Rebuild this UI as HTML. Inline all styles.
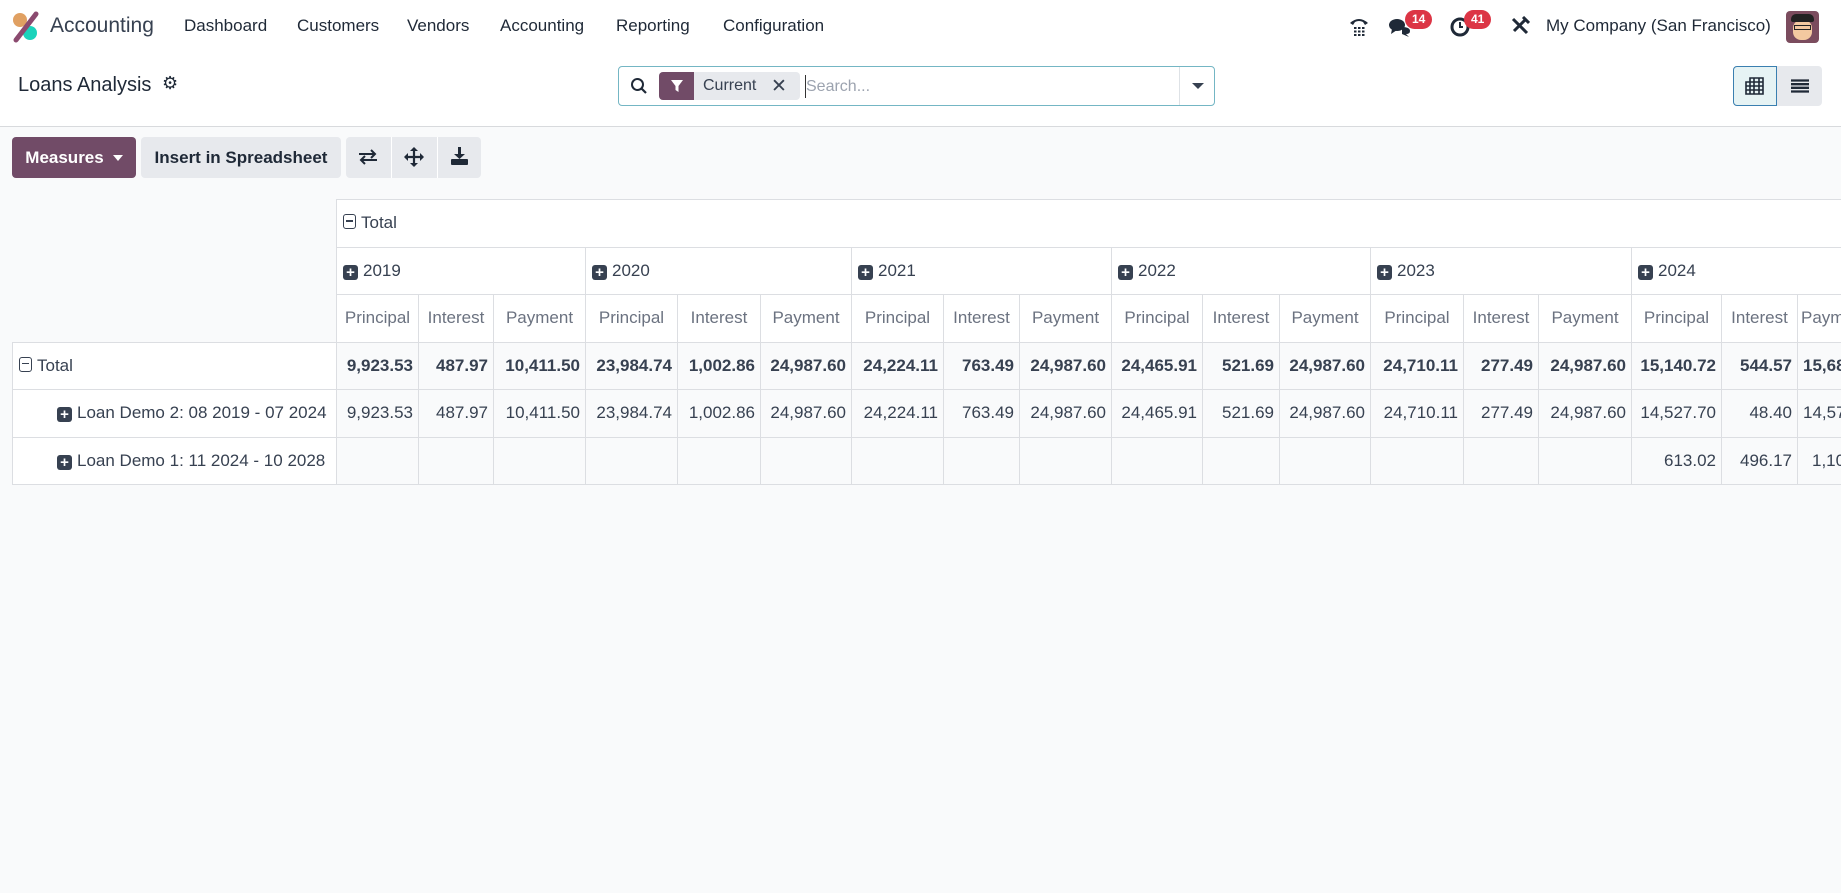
<!DOCTYPE html>
<html><head><meta charset="utf-8"><style>
*{box-sizing:border-box;margin:0;padding:0}
body{width:1841px;height:893px;overflow:hidden;background:#f9fafb;font-family:"Liberation Sans",sans-serif;color:#374151;position:relative}
.nav{position:absolute;left:0;top:0;width:1841px;height:54px;background:#fff}
.nav span{position:absolute;top:16px;font-size:17px;color:#1f2937}
.cp{position:absolute;left:0;top:54px;width:1841px;height:73px;background:#fff;border-bottom:1px solid #d8dadd}
.abs{position:absolute}
.btn{position:absolute;top:137px;height:41px;border-radius:4px;font-size:17px;font-weight:bold;display:flex;align-items:center;justify-content:center}
table{position:absolute;left:12px;top:199px;width:1875px;border-collapse:collapse;table-layout:fixed;font-size:17px}
td{border:1px solid #dcdee2;height:47.5px;padding:0 6px;white-space:nowrap;overflow:hidden}
td.e{border:none;background:transparent}
td.h{background:#fff;color:#374151}
td.m{background:#fff;color:#6b7280;text-align:center;padding:0 3px}
td.n{background:#f9fafb;text-align:right;padding:0 5px}
tr.t td.n{font-weight:bold}
.pl{display:inline-block;width:15px;height:15px;background:#374151;border-radius:3px;color:#fff;font-size:15px;line-height:15px;text-align:center;font-weight:bold;vertical-align:-1px;margin-right:5px}
.mi{display:inline-block;width:13px;height:15px;border:1.5px solid #374151;border-radius:3px;position:relative;vertical-align:-1px;margin-right:5px}
.mi:after{content:"";position:absolute;left:2px;right:2px;top:5px;height:1.5px;background:#374151}
.badge{position:absolute;top:10px;height:19px;background:#dc3545;color:#fff;font-size:12px;font-weight:bold;border-radius:10px;padding:2px 7px}
</style></head><body>
<div class="nav">
<svg class="abs" style="left:10px;top:10px" width="32" height="34" viewBox="0 0 32 34"><circle cx="10" cy="10" r="7" fill="#e0a062"/><circle cx="20" cy="23" r="7" fill="#1ad3bb"/><path d="M26 4 L6 30" stroke="#8b4a6f" stroke-width="5" stroke-linecap="round"/></svg>
<span style="left:50px;top:14px;font-size:21px;color:#374151">Accounting</span>
<span style="left:184px">Dashboard</span><span style="left:297px">Customers</span><span style="left:407px">Vendors</span><span style="left:500px">Accounting</span><span style="left:616px">Reporting</span><span style="left:723px">Configuration</span>
<svg class="abs" style="left:1348px;top:15px" width="22" height="22" viewBox="0 0 22 22"><path d="M2 8 Q11 0 20 8 L17 10 L15 7 Q11 5 7 7 L5 10Z" fill="#1f2937"/><g fill="#1f2937"><rect x="6" y="12" width="2.5" height="2"/><rect x="10" y="12" width="2.5" height="2"/><rect x="14" y="12" width="2.5" height="2"/><rect x="6" y="15.5" width="2.5" height="2"/><rect x="10" y="15.5" width="2.5" height="2"/><rect x="14" y="15.5" width="2.5" height="2"/><rect x="6" y="19" width="2.5" height="2"/><rect x="10" y="19" width="2.5" height="2"/><rect x="14" y="19" width="2.5" height="2"/></g></svg>
<svg class="abs" style="left:1388px;top:16px" width="24" height="22" viewBox="0 0 24 22"><ellipse cx="9" cy="9" rx="8" ry="6" fill="#1f2937"/><path d="M4 13 L3 18 L9 14Z" fill="#1f2937"/><path d="M14 11 Q22 11 22 15 Q22 18 18 18 L21 21 L14 18Z" fill="#1f2937"/></svg>
<div class="badge" style="left:1405px">14</div>
<svg class="abs" style="left:1450px;top:17px" width="20" height="20" viewBox="0 0 20 20"><circle cx="10" cy="10" r="8" fill="none" stroke="#1f2937" stroke-width="3"/><path d="M10 5 V10 H13" stroke="#1f2937" stroke-width="2" fill="none"/></svg>
<div class="badge" style="left:1464px">41</div>
<svg class="abs" style="left:1510px;top:16px" width="20" height="20" viewBox="0 0 20 20"><path d="M3 3 L17 17 M16 3 L4 15" stroke="#1f2937" stroke-width="3"/><path d="M13 1 L19 7" stroke="#1f2937" stroke-width="3"/></svg>
<span style="left:1546px;color:#1f2937">My Company (San Francisco)</span>
<div class="abs" style="left:1786px;top:11px;width:33px;height:32px;border-radius:4px;background:#7b4c5e;overflow:hidden"><div class="abs" style="left:7px;top:9px;width:19px;height:20px;border-radius:8px;background:#f3c9a0"></div><div class="abs" style="left:5px;top:3px;width:23px;height:8px;background:#222;border-radius:5px 5px 2px 2px"></div><div class="abs" style="left:8px;top:14px;width:17px;height:5px;border:1.5px solid #222"></div></div>
</div>
<div class="cp">
<span class="abs" style="left:18px;top:20px;font-size:20px;color:#1f2937">Loans Analysis</span>
<span class="abs" style="left:162px;top:19px;font-size:18px;color:#1f2937">⚙</span>
<div class="abs" style="left:618px;top:12px;width:597px;height:40px;border:1px solid #74b6c4;border-radius:4px;background:#fff"></div>
<svg class="abs" style="left:630px;top:23px" width="18" height="18" viewBox="0 0 18 18"><circle cx="7.5" cy="7.5" r="5.5" fill="none" stroke="#1f2937" stroke-width="2"/><path d="M11.5 11.5 L16 16" stroke="#1f2937" stroke-width="2.2"/></svg>
<div class="abs" style="left:659px;top:18px;width:141px;height:28px;background:#e7e9ed;border-radius:4px"></div>
<div class="abs" style="left:659px;top:18px;width:35px;height:28px;background:#714b67;border-radius:4px 0 0 4px"></div>
<svg class="abs" style="left:670px;top:25px" width="14" height="14" viewBox="0 0 14 14"><path d="M1 1 H13 L8.5 7 V13 L5.5 11 V7Z" fill="#fff"/></svg>
<span class="abs" style="left:703px;top:23px;font-size:16px;color:#374151">Current</span>
<span class="abs" style="left:771px;top:21px;font-size:19px;color:#374151">✕</span>
<div class="abs" style="left:805px;top:21px;width:1px;height:23px;background:#333"></div>
<span class="abs" style="left:806px;top:24px;font-size:16px;color:#9ca3af">Search...</span>
<div class="abs" style="left:1179px;top:13px;width:1px;height:38px;background:#dee2e6"></div>
<div class="abs" style="left:1192px;top:29px;border-left:6px solid transparent;border-right:6px solid transparent;border-top:6px solid #374151"></div>
<div class="abs" style="left:1733px;top:12px;width:89px;height:40px;border-radius:4px;background:#e7e9ed"></div>
<div class="abs" style="left:1733px;top:12px;width:44px;height:40px;border-radius:4px 0 0 4px;background:#e6f3f4;border:1px solid #3a7fb0"></div>
<svg class="abs" style="left:1745px;top:23px" width="19" height="18" viewBox="0 0 19 18"><path d="M5 1 H18 V17 H1 V5 H5Z M1 9 H18 M1 13 H18 M5 5 V17 M9 1 V17 M14 1 V17 M5 5 H18" stroke="#1f2937" stroke-width="1.6" fill="none"/></svg>
<svg class="abs" style="left:1791px;top:25px" width="18" height="14" viewBox="0 0 18 14"><path d="M0 1.5 H18 M0 5.2 H18 M0 8.8 H18 M0 12.5 H18" stroke="#1f2937" stroke-width="2.3"/></svg>
</div>
<div class="btn" style="left:12px;width:124px;background:#714b67;color:#fff">Measures <span style="display:inline-block;margin-left:9px;border-left:5px solid transparent;border-right:5px solid transparent;border-top:6px solid #fff"></span></div>
<div class="btn" style="left:141px;width:200px;background:#e7e9ed;color:#1f2937">Insert in Spreadsheet</div>
<div class="btn" style="left:346px;width:135px;background:#e7e9ed"></div>
<div class="abs" style="left:391px;top:137px;width:1px;height:41px;background:#fff"></div>
<div class="abs" style="left:437px;top:137px;width:1px;height:41px;background:#fff"></div>
<svg class="abs" style="left:358px;top:149px" width="20" height="16" viewBox="0 0 20 16"><path d="M1 5 H17 M13 1 L17 5 L13 9 M19 11 H3 M7 7 L3 11 L7 15" stroke="#1f2937" stroke-width="2" fill="none"/></svg>
<svg class="abs" style="left:404px;top:147px" width="20" height="20" viewBox="0 0 20 20"><path d="M10 1 V19 M1 10 H19" stroke="#1f2937" stroke-width="2.2"/><path d="M10 0 L6 4 H14Z M10 20 L6 16 H14Z M0 10 L4 6 V14Z M20 10 L16 6 V14Z" fill="#1f2937"/></svg>
<svg class="abs" style="left:451px;top:147px" width="17" height="18" viewBox="0 0 17 18"><path d="M8.5 0 V9" stroke="#1f2937" stroke-width="3"/><path d="M3 7 L8.5 12 L14 7Z" fill="#1f2937"/><rect x="0" y="12" width="17" height="6" rx="1" fill="#1f2937"/></svg>
<table>
<colgroup><col style="width:324px"><col style="width:82px"><col style="width:75px"><col style="width:92px"><col style="width:92px"><col style="width:83px"><col style="width:91px"><col style="width:92px"><col style="width:76px"><col style="width:92px"><col style="width:91px"><col style="width:77px"><col style="width:91px"><col style="width:93px"><col style="width:75px"><col style="width:93px"><col style="width:90px"><col style="width:76px"><col style="width:90px"></colgroup>
<tr><td class="e"></td><td class="h" colspan="18"><span class="mi"></span>Total</td></tr>
<tr><td class="e"></td><td class="h" colspan="3"><span class="pl">+</span>2019</td><td class="h" colspan="3"><span class="pl">+</span>2020</td><td class="h" colspan="3"><span class="pl">+</span>2021</td><td class="h" colspan="3"><span class="pl">+</span>2022</td><td class="h" colspan="3"><span class="pl">+</span>2023</td><td class="h" colspan="3"><span class="pl">+</span>2024</td></tr>
<tr><td class="e"></td><td class="m">Principal</td><td class="m">Interest</td><td class="m">Payment</td><td class="m">Principal</td><td class="m">Interest</td><td class="m">Payment</td><td class="m">Principal</td><td class="m">Interest</td><td class="m">Payment</td><td class="m">Principal</td><td class="m">Interest</td><td class="m">Payment</td><td class="m">Principal</td><td class="m">Interest</td><td class="m">Payment</td><td class="m">Principal</td><td class="m">Interest</td><td class="m" style="text-align:left">Payment</td></tr>
<tr class="t"><td class="h"><span class="mi"></span>Total</td><td class="n">9,923.53</td><td class="n">487.97</td><td class="n">10,411.50</td><td class="n">23,984.74</td><td class="n">1,002.86</td><td class="n">24,987.60</td><td class="n">24,224.11</td><td class="n">763.49</td><td class="n">24,987.60</td><td class="n">24,465.91</td><td class="n">521.69</td><td class="n">24,987.60</td><td class="n">24,710.11</td><td class="n">277.49</td><td class="n">24,987.60</td><td class="n">15,140.72</td><td class="n">544.57</td><td class="n" style="text-align:left">15,685.29</td></tr>
<tr><td class="h" style="padding-left:44px"><span class="pl">+</span>Loan Demo 2: 08 2019 - 07 2024</td><td class="n">9,923.53</td><td class="n">487.97</td><td class="n">10,411.50</td><td class="n">23,984.74</td><td class="n">1,002.86</td><td class="n">24,987.60</td><td class="n">24,224.11</td><td class="n">763.49</td><td class="n">24,987.60</td><td class="n">24,465.91</td><td class="n">521.69</td><td class="n">24,987.60</td><td class="n">24,710.11</td><td class="n">277.49</td><td class="n">24,987.60</td><td class="n">14,527.70</td><td class="n">48.40</td><td class="n" style="text-align:left">14,576.10</td></tr>
<tr><td class="h" style="padding-left:44px"><span class="pl">+</span>Loan Demo 1: 11 2024 - 10 2028</td><td class="n"></td><td class="n"></td><td class="n"></td><td class="n"></td><td class="n"></td><td class="n"></td><td class="n"></td><td class="n"></td><td class="n"></td><td class="n"></td><td class="n"></td><td class="n"></td><td class="n"></td><td class="n"></td><td class="n"></td><td class="n">613.02</td><td class="n">496.17</td><td class="n" style="text-align:left;padding-left:14px">1,109.19</td></tr>
</table>
</body></html>
